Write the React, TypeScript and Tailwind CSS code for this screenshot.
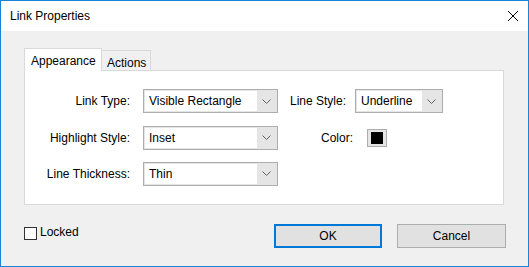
import React from 'react';

const font = { fontFamily: '"Liberation Sans", Arial, sans-serif' };

const Chevron = () => (
    <svg width="9" height="5" viewBox="0 0 9 5" className="text-[#606060]">
        <path d="M0.5 0.5 L4.5 4.5 L8.5 0.5" fill="none" stroke="currentColor" strokeWidth="1" />
    </svg>
);

const Select = ({ value, width }: { value: string; width: string }) => (
    <div className={`${width} h-[24px] border border-[#adadad] bg-[#e5e5e5] flex items-stretch p-px`}>
        <div className="flex-1 bg-white flex items-center pl-[4px] text-black whitespace-nowrap">{value}</div>
        <div className="w-[19px] flex items-center justify-center">
            <Chevron />
        </div>
    </div>
);

export default function App() {
    return (
        <div className="w-[529px] h-[267px] border border-[#1883d7] flex flex-col text-[12px] text-black" style={font}>
            {/* title bar */}
            <div className="h-[30px] bg-white flex items-center justify-between pl-[9px] pr-[10px] shrink-0">
                <span>Link Properties</span>
                <svg width="10" height="10" viewBox="0 0 10 10">
                    <path d="M0 0 L10 10 M10 0 L0 10" stroke="#000" strokeWidth="1" />
                </svg>
            </div>

            <div className="flex-1 bg-[#f0f0f0] pl-[23px] pr-[22px] pt-[17px] flex flex-col">
                {/* tabs */}
                <div className="flex items-end h-[22px]">
                    <div className="relative z-10 h-[23px] -mb-px w-[78px] bg-white border border-b-0 border-[#d9d9d9] pl-[6px] pt-[3px] whitespace-nowrap">
                        Appearance
                    </div>
                    <div className="h-[20px] w-[50px] -ml-px border border-b-0 border-[#d9d9d9] bg-[#f0f0f0] pl-[5px] pt-[3px]">
                        Actions
                    </div>
                </div>

                {/* panel */}
                <div className="w-[480px] h-[135px] border border-[#d9d9d9] bg-white pt-[18px] flex flex-col gap-[13px]">
                    <div className="flex items-center h-[24px]">
                        <div className="w-[105px] text-right whitespace-nowrap">Link Type:</div>
                        <div className="ml-[13px]"><Select value="Visible Rectangle" width="w-[135px]" /></div>
                        <div className="ml-[12px] w-[53px] whitespace-nowrap">Line Style:</div>
                        <div className="ml-[12px]"><Select value="Underline" width="w-[88px]" /></div>
                    </div>
                    <div className="flex items-center h-[23px]">
                        <div className="w-[105px] text-right whitespace-nowrap">Highlight Style:</div>
                        <div className="ml-[13px]"><Select value="Inset" width="w-[135px]" /></div>
                        <div className="ml-[12px] w-[63px] text-right">Color:</div>
                        <div className="ml-[14px] w-[20px] h-[18px] border border-[#adadad] bg-[#e5e5e5] flex items-center justify-center">
                            <div className="w-[12px] h-[12px] bg-black" />
                        </div>
                    </div>
                    <div className="flex items-center h-[23px]">
                        <div className="w-[105px] text-right whitespace-nowrap">Line Thickness:</div>
                        <div className="ml-[13px]"><Select value="Thin" width="w-[135px]" /></div>
                    </div>
                </div>

                {/* footer */}
                <div className="flex items-start mt-[19px]">
                    <div className="flex items-center gap-[3px] mt-px">
                        <div className="w-[13px] h-[13px] border border-[#333333] bg-white" />
                        <span className="-mt-[2px]">Locked</span>
                    </div>
                    <div className="ml-auto flex gap-[15px]">
                        <button className="w-[108px] h-[24px] border-2 border-[#0078d7] bg-[#e1e1e1] text-black">OK</button>
                        <button className="w-[109px] h-[24px] border border-[#adadad] bg-[#e1e1e1] text-black">Cancel</button>
                    </div>
                </div>
            </div>
        </div>
    );
}
